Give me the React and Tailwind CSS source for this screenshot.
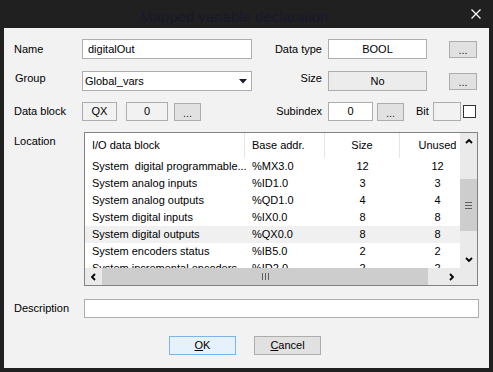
import React from 'react';

const rows = [
  ['System  digital programmable...', '%MX3.0', '12', '12'],
  ['System analog inputs', '%ID1.0', '3', '3'],
  ['System analog outputs', '%QD1.0', '4', '4'],
  ['System digital inputs', '%IX0.0', '8', '8'],
  ['System digital outputs', '%QX0.0', '8', '8', true],
  ['System encoders status', '%IB5.0', '2', '2'],
  ['System incremental encoders', '%ID2.0', '2', '2'],
];

function Dots({ className = '' }) {
  return (
    <div className={`flex items-center justify-center border border-[#adadad] bg-[#e1e1e1] pt-[3px] text-[11px] leading-none text-[#1e1e3c] ${className}`}>
      ...
    </div>
  );
}

function Chevron({ dir }) {
  const pts = {
    up: '1,5 4,2 7,5',
    down: '1,2 4,5 7,2',
    left: '5,1 2,4 5,7',
    right: '2,1 5,4 2,7',
  }[dir];
  return (
    <svg width="8" height="8" viewBox="0 0 8 8">
      <polyline points={pts} fill="none" stroke="#000" strokeWidth="1.8" />
    </svg>
  );
}

function Table() {
  return (
    <div className="flex h-[154px] w-[394px] flex-col border border-[#828282] bg-white">
      <div className="flex h-[135px]">
        <div className="w-[375px] overflow-hidden">
          <div className="flex h-[25px] w-[390px] items-center">
            <div className="flex h-full w-[160px] items-center border-r border-[#e5e5e5] pl-[7px]">I/O data block</div>
            <div className="flex h-full w-[80px] items-center border-r border-[#e5e5e5] pl-[7px]">Base addr.</div>
            <div className="flex h-full w-[75px] items-center justify-center border-r border-[#e5e5e5]">Size</div>
            <div className="flex h-full w-[75px] items-center justify-center">Unused</div>
          </div>
          {rows.map((r) => (
            <div key={r[0]} className={`flex h-[17px] w-[390px] items-center ${r[4] ? 'bg-[#f0f0f0]' : ''}`}>
              <div className="w-[160px] whitespace-pre pl-[7px]">{r[0]}</div>
              <div className="w-[80px] pl-[7px]">{r[1]}</div>
              <div className="w-[75px] text-center">{r[2]}</div>
              <div className="w-[75px] text-center">{r[3]}</div>
            </div>
          ))}
        </div>
        <div className="flex w-[17px] flex-col bg-[#eaeaea]">
          <div className="flex h-[17px] items-center justify-center"><Chevron dir="up" /></div>
          <div className="h-[29px]" />
          <div className="flex h-[52px] items-center justify-center bg-[#cdcdcd]">
            <div className="flex w-[7px] flex-col gap-[2px]">
              <div className="h-px bg-[#606060]" />
              <div className="h-px bg-[#606060]" />
              <div className="h-px bg-[#606060]" />
            </div>
          </div>
          <div className="flex-1" />
          <div className="flex h-[17px] items-center justify-center"><Chevron dir="down" /></div>
        </div>
      </div>
      <div className="flex h-[17px] bg-[#eaeaea]">
        <div className="flex w-[17px] items-center justify-center"><Chevron dir="left" /></div>
        <div className="flex w-[326px] items-center justify-center bg-[#cdcdcd]">
          <div className="flex h-[7px] gap-[2px]">
            <div className="w-px bg-[#606060]" />
            <div className="w-px bg-[#606060]" />
            <div className="w-px bg-[#606060]" />
          </div>
        </div>
        <div className="w-[15px]" />
        <div className="flex w-[17px] items-center justify-center"><Chevron dir="right" /></div>
        <div className="w-[17px]" />
      </div>
    </div>
  );
}

export default function App() {
  return (
    <div className="flex h-[372px] w-[493px] flex-col bg-[#202020] font-['Liberation_Sans',Arial,sans-serif] text-[11px] text-black">
      <div className="flex h-[28px] items-center">
        <span className="ml-[140px] pt-[6px] text-[15px] text-[#18182c]">Mapped variable declaration</span>
        <svg className="ml-auto mr-[12px]" width="10" height="10" viewBox="0 0 10 10">
          <path d="M0.5 0.5 L9.5 9.5 M9.5 0.5 L0.5 9.5" stroke="#fff" strokeWidth="1.2" />
        </svg>
      </div>

      <div className="mx-[4px] flex h-[340px] flex-col bg-[#f2f2f2] pl-[10px] pt-[11px]">
        <div className="flex h-[20px] items-center">
          <span className="w-[68px]">Name</span>
          <div className="flex h-[20px] w-[170px] items-center border border-[#adadad] bg-white pl-[5px]">digitalOut</div>
          <span className="w-[76px] pr-[6px] text-right">Data type</span>
          <div className="flex h-[20px] w-[99px] items-center justify-center border border-[#adadad] bg-white">BOOL</div>
          <Dots className="ml-[22px] h-[17px] w-[28px]" />
        </div>

        <div className="mt-[12px] flex h-[20px] items-center">
          <span className="-mt-[5px] w-[68px] pl-px">Group</span>
          <div className="flex h-[20px] w-[170px] items-center border border-[#adadad] bg-white pl-[2px] pr-[4px]">
            <span>Global_vars</span>
            <svg className="ml-auto" width="8" height="5" viewBox="0 0 8 5">
              <path d="M0 0 H8 L4 4.5 Z" fill="#1a1a3a" />
            </svg>
          </div>
          <span className="-mt-[5px] w-[76px] pr-[6px] text-right">Size</span>
          <div className="flex h-[20px] w-[99px] items-center justify-center border border-[#adadad] bg-[#ececec]">No</div>
          <Dots className="ml-[22px] h-[17px] w-[28px]" />
        </div>

        <div className="mt-[11px] flex h-[19px] items-center">
          <span className="w-[68px]">Data block</span>
          <div className="flex h-[19px] w-[35px] items-center justify-center border border-[#adadad] bg-[#f2f2f2]">QX</div>
          <div className="ml-[9px] flex h-[19px] w-[42px] items-center justify-center border border-[#adadad] bg-[#f2f2f2]">0</div>
          <Dots className="ml-[6px] h-[18px] w-[27px]" />
          <span className="w-[127px] pr-[6px] text-right">Subindex</span>
          <div className="flex h-[19px] w-[45px] items-center justify-center border border-[#adadad] bg-white">0</div>
          <Dots className="ml-[4px] h-[18px] w-[27px]" />
          <span className="ml-[12px] w-[17px]">Bit</span>
          <div className="h-[19px] w-[28px] border border-[#adadad] bg-[#f2f2f2]" />
          <div className="ml-[2px] h-[13px] w-[13px] border border-[#333] bg-white" />
        </div>

        <div className="mt-[11px] flex">
          <span className="w-[70px] pt-px">Location</span>
          <Table />
        </div>

        <div className="mt-[13px] flex h-[19px] items-center">
          <span className="w-[70px]">Description</span>
          <div className="h-[19px] w-[395px] border border-[#adadad] bg-white" />
        </div>

        <div className="mt-[18px] flex h-[19px]">
          <div className="ml-[155px] flex w-[67px] items-center justify-center border border-[#7eb4ea] bg-[#e5f1fb]">
            <span><span className="underline">O</span>K</span>
          </div>
          <div className="ml-[18px] flex w-[67px] items-center justify-center border border-[#adadad] bg-[#e1e1e1]">
            <span><span className="underline">C</span>ancel</span>
          </div>
        </div>
      </div>
    </div>
  );
}
